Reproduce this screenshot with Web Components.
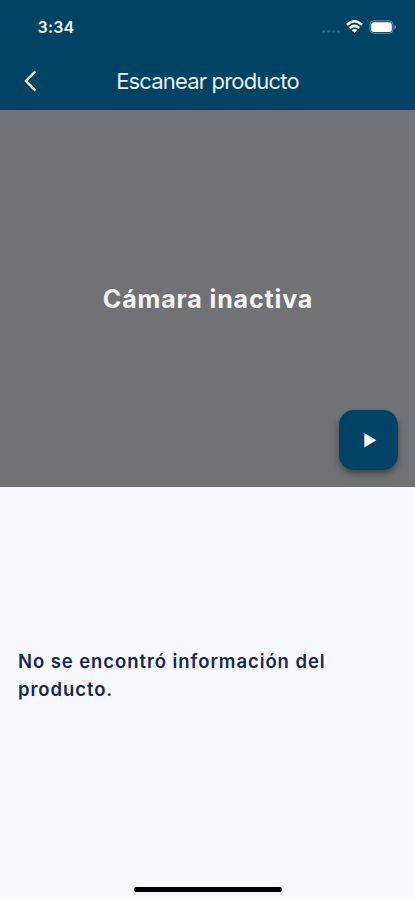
<!DOCTYPE html>
<html lang="es">
<head>
<meta charset="utf-8">
<title>Escanear producto</title>
<style>
html,body{margin:0;height:100%;overflow:hidden;background:#f8f9ff}
body{font-family:Inter,"Liberation Sans",sans-serif}
</style>
</head>
<body>
<scan-screen>
  <status-bar slot="top" time="3:34"></status-bar>
  <app-header slot="top">Escanear producto</app-header>
  <camera-view slot="camera">Cámara inactiva<play-button slot="action"></play-button></camera-view>
  <result-panel>No se encontró información del producto.</result-panel>
  <home-indicator slot="bottom"></home-indicator>
</scan-screen>
<script>
function define(name, html) {
  const template = document.createElement('template');
  template.innerHTML = html;
  customElements.define(name, class extends HTMLElement {
    constructor() {
      super();
      this.attachShadow({mode: 'open'}).append(template.content.cloneNode(true));
    }
    connectedCallback() {
      const time = this.shadowRoot.querySelector('.time');
      if (time) time.textContent = this.getAttribute('time');
    }
  });
}

define('status-bar', `
<style>
:host{display:flex;justify-content:space-between;align-items:center;height:53px;box-sizing:border-box;padding:0 17px 0 37.5px;color:#f4f8fb}
.time{font-size:16px;font-weight:600;line-height:20px;letter-spacing:.2px}
svg{display:block}
</style>
<span class="time"></span>
<svg width="78" height="20" viewBox="0 0 78 20">
  <g fill="#3f708c"><circle cx="3.5" cy="14.4" r="1.2"/><circle cx="8.5" cy="14.4" r="1.2"/><circle cx="13.5" cy="14.4" r="1.2"/><circle cx="18.5" cy="14.4" r="1.2"/></g>
  <g fill="none" stroke="#fff" stroke-width="2.5">
    <path d="M27 7.8Q34.5 .8 42 7.8"/><path d="M29.8 11Q34.5 6.8 39.2 11"/>
  </g>
  <path d="M31.8 13Q34.5 10.8 37.2 13L34.5 15.9Z" fill="#fff"/>
  <rect x="50" y="3.9" width="23" height="12.4" rx="3.8" fill="none" stroke="#6690a7"/>
  <rect x="51.2" y="5.3" width="20.6" height="9.8" rx="2.4" fill="#fff"/>
  <path d="M74.5 8Q77.5 10.1 74.5 12.2Z" fill="#7fa0b3"/>
</svg>`);

define('app-header', `
<style>
:host{display:grid;grid-template-columns:60px 1fr 60px;align-items:center;height:57px;color:#eaf2f7}
svg{display:block;justify-self:center}
h1{margin:0;padding-bottom:2px;text-align:center;white-space:nowrap;font-size:22px;line-height:28px;font-weight:400;letter-spacing:-.82px}
</style>
<svg width="20" height="26" viewBox="0 0 20 26"><path d="M15.4 2.4L6 12L15.4 21.6" fill="none" stroke="#fff" stroke-width="2.5"/></svg>
<h1><slot></slot></h1>`);

define('camera-view', `
<style>
:host{display:grid;align-items:center;justify-items:center;height:377px;background:#717276;color:#f6f6f7}
.label,.action{grid-area:1/1}
.label{padding-left:1px;font-size:25px;line-height:32px;font-weight:700;letter-spacing:.87px;white-space:nowrap}
.action{place-self:end;padding:0 17px 17px 0}
</style>
<div class="label"><slot></slot></div>
<div class="action"><slot name="action"></slot></div>`);

define('play-button', `
<style>
:host{display:grid;place-items:center;width:59px;height:60px;border-radius:15px;background:#004364;box-shadow:0 3px 5px rgba(0,0,0,.28),0 5px 9px rgba(0,0,0,.16)}
svg{display:block}
</style>
<svg width="59" height="60" viewBox="0 0 59 60"><path d="M25.3 23L37.4 30.3L25.3 37.6Z" fill="#fff"/></svg>`);

define('result-panel', `
<style>
:host{display:flex;align-items:center;padding:0 18px;color:#182653}
p{margin:0;font-size:18.5px;line-height:28px;font-weight:600;letter-spacing:.92px}
</style>
<p><slot></slot></p>`);

define('home-indicator', `
<style>:host{display:block;width:148px;height:5px;border-radius:3px;background:#000}</style>`);

define('scan-screen', `
<style>
:host{display:flex;flex-direction:column;height:900px;background:#f8f9ff}
.top{background:#004364}
.content{flex:1;display:grid;padding-bottom:25px}
.bottom{display:flex;justify-content:center;padding-bottom:8px}
</style>
<div class="top"><slot name="top"></slot></div>
<slot name="camera"></slot>
<div class="content"><slot></slot></div>
<div class="bottom"><slot name="bottom"></slot></div>`);
</script>
</body>
</html>
